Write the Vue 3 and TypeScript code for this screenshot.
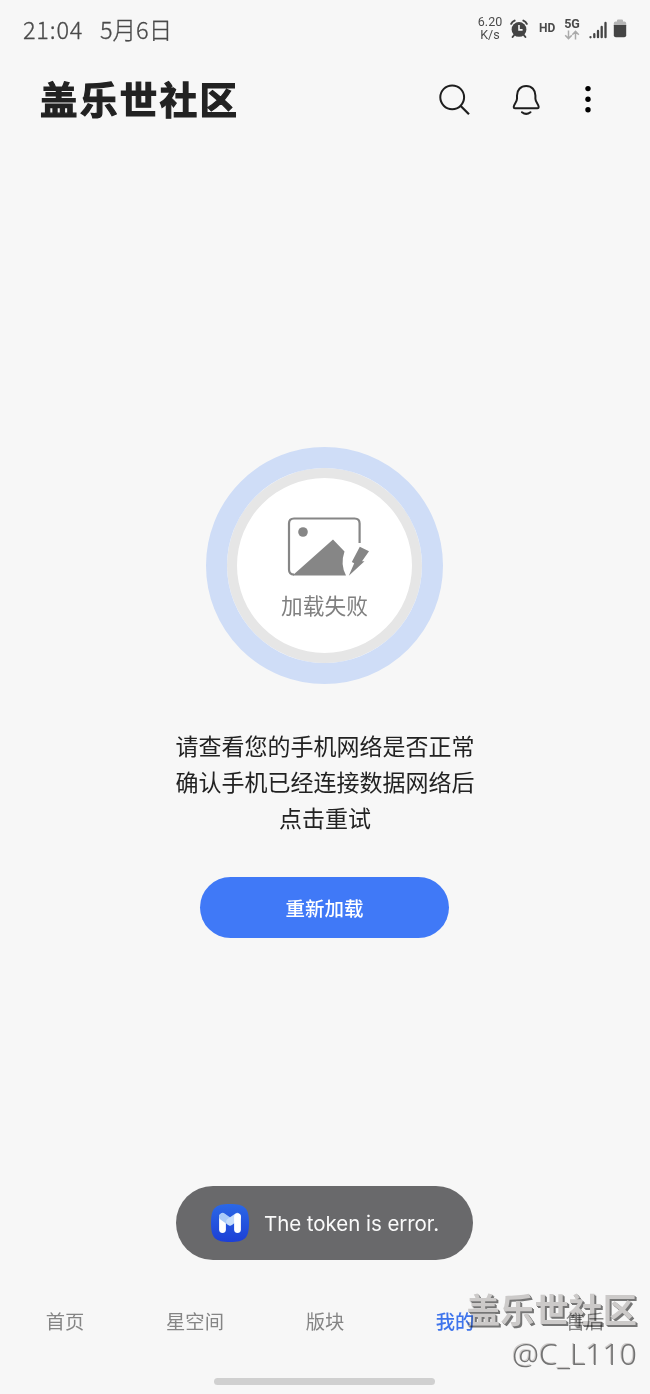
<script setup lang="ts">
interface Tab {
  label: string
  active: boolean
}

const tabs: Tab[] = [
  { label: '首页', active: false },
  { label: '星空间', active: false },
  { label: '版块', active: false },
  { label: '我的', active: true },
  { label: '售后', active: false },
]

const hints: string[] = ['请查看您的手机网络是否正常', '确认手机已经连接数据网络后', '点击重试']
</script>

<template>
  <div class="screen">
    <header class="status">
      <span class="clock">21:04</span>
      <span class="date">5月6日</span>
      <div class="speed"><span>6.20</span><span>K/s</span></div>
      <svg class="alarm" width="18" height="20" viewBox="0 0 18 20">
        <circle cx="9" cy="10.4" r="7.4" fill="#444" />
        <path d="M1.2 4.800Q2.200 2.500 4.600 1.600M16.800 4.800Q15.800 2.500 13.400 1.600" fill="none" stroke="#444" stroke-width="2" stroke-linecap="round" />
        <path d="M4.200 16L2.600 18M13.800 16l1.600 2" stroke="#444" stroke-width="2" stroke-linecap="round" />
        <path d="M9 6v4.900h3.600" fill="none" stroke="#f7f7f7" stroke-width="1.600" />
      </svg>
      <span class="hd">HD</span>
      <div class="net">
        <span>5G</span>
        <svg width="16" height="10" viewBox="0 0 16 10" fill="none" stroke="#aaa" stroke-width="1.500">
          <path d="M4.500 .5v8M1.200 5.300l3.300 3.300 3.300-3.300M11.500 9.500v-8M8.300 4.700l3.200-3.300 3.300 3.300" />
        </svg>
      </div>
      <svg class="signal" width="18" height="18" viewBox="0 0 18 18" stroke="#444" stroke-width="2.300" stroke-linecap="round">
        <path d="M1.500 16.200v.1M5.300 13.200v3M9 10v6.200M12.700 6v10.200M16.500 2v14.200" />
      </svg>
      <svg class="battery" width="14" height="19" viewBox="0 0 14 19">
        <path d="M.8 7V4.200Q.8 2.500 2.600 2.500H4V1.600Q4 .5 5 .5h4q1 0 1 1.100v.9h1.400q1.800 0 1.800 1.700V7z" fill="#b5b5b5" />
        <path d="M.8 6h12.400v10.300q0 2-2 2H2.800q-2 0-2-2z" fill="#444" />
      </svg>
    </header>

    <div class="appbar">
      <h1 class="title">盖乐世社区</h1>
      <svg class="search" width="32" height="32" viewBox="0 0 32 32" fill="none" stroke="#1e1e1e" stroke-width="2">
        <circle cx="13.200" cy="13.300" r="11.900" />
        <path d="M21.700 22l8.300 8.300" stroke-width="2.200" />
      </svg>
      <svg class="bell" width="28" height="32" viewBox="0 0 28 32" fill="none" stroke="#1e1e1e" stroke-width="2" stroke-linejoin="round">
        <path d="M14.200 2C8.500 2 5 6.200 5 11.500v3.200C5 18 1.700 20.700 1.700 23q0 1.200 1.300 1.200h22.400q1.300 0 1.300-1.200C26.700 20.700 23.400 18 23.400 14.700v-3.200C23.400 6.200 19.900 2 14.200 2z" />
        <path d="M10 28.200q4.200 3.400 8.400 0" stroke-linecap="round" />
      </svg>
      <svg class="more" width="8" height="28" viewBox="0 0 8 28">
        <circle cx="4" cy="3.600" r="2.700" /><circle cx="4" cy="14.200" r="2.700" /><circle cx="4" cy="24.800" r="2.700" />
      </svg>
    </div>

    <main class="content">
      <div class="badge">
        <svg width="84" height="62" viewBox="0 0 84 62">
          <path d="M73.600 27V7.500q0-5-5-5H8q-5 0-5 5v46q0 5 5 5" fill="none" stroke="#868686" stroke-width="2.200" />
          <circle cx="17" cy="16" r="4.800" fill="#868686" />
          <path d="M6.500 59.400L47 23.600 58.500 35.500Q54 48.500 60 59.400z" fill="#868686" />
          <path d="M73.800 30.700L83 35.200 76 45.200H78.500L62.800 59.800 68.200 47.300 65.800 46z" fill="#868686" />
        </svg>
        <span class="badge-label">加载失败</span>
      </div>
      <div class="hints">
        <p v-for="line in hints" :key="line">{{ line }}</p>
      </div>
      <button class="reload" type="button">重新加载</button>
    </main>

    <div class="toast">
      <svg width="40" height="40" viewBox="0 0 40 40">
        <defs>
          <linearGradient id="tile" x1="0" y1="0" x2="0" y2="1">
            <stop offset="0" stop-color="#2b68e6" /><stop offset="1" stop-color="#1c3fd6" />
          </linearGradient>
        </defs>
        <path d="M20 1C35 1 39 5 39 20S35 39 20 39 1 35 1 20 5 1 20 1z" fill="url(#tile)" />
        <path d="M12.500 14v12.500" stroke="#fff" stroke-width="6.800" stroke-linecap="round" />
        <path d="M12.800 13.700l7.200 5" stroke="#a9cbf8" stroke-width="7.400" stroke-linecap="round" />
        <path d="M20 18.700l7.200-5" stroke="#c6ddfb" stroke-width="7.400" stroke-linecap="round" />
        <path d="M27.500 14v12.500" stroke="#fff" stroke-width="6.800" stroke-linecap="round" />
      </svg>
      <span>The token is error.</span>
    </div>

    <nav class="tabs">
      <span v-for="tab in tabs" :key="tab.label" :class="{ active: tab.active }">{{ tab.label }}</span>
    </nav>
    <div class="home"></div>

    <div class="watermark">
      <div class="mark-name">盖乐世社区</div>
      <div class="mark-user">@C_L110</div>
    </div>
  </div>
</template>

<style>
body {
  margin: 0;
  background: #f7f7f7;
}
</style>

<style scoped>
.screen {
  position: relative;
  display: flex;
  flex-direction: column;
  align-items: center;
  width: 650px;
  height: 1394px;
  overflow: hidden;
  background: #f7f7f7;
  font-family: "Noto Sans CJK SC", sans-serif;
  color: #222;
}
.screen svg {
  display: block;
  flex: none;
}
.status {
  display: flex;
  align-items: center;
  box-sizing: border-box;
  width: 650px;
  height: 60px;
  padding-left: 23px;
  color: #4a4a4a;
  white-space: nowrap;
}
.clock,
.date {
  margin-top: -2px;
  font-size: 23.500px;
  font-weight: 300;
  line-height: 36px;
  -webkit-text-stroke: 0.300px #4a4a4a;
}
.clock {
  width: 77px;
  letter-spacing: 0.800px;
}
.date {
  width: 377px;
}
.speed {
  display: flex;
  flex-direction: column;
  align-items: center;
  width: 26px;
  margin-top: -4px;
  font: 12.500px/13px Roboto, sans-serif;
}
.alarm {
  margin: -3px 0 0 7px;
}
.hd {
  width: 17px;
  margin: -4px 0 0 11px;
  font: 700 12px/14px Roboto, sans-serif;
}
.net {
  display: flex;
  flex-direction: column;
  align-items: center;
  width: 16px;
  margin: -3px 0 0 8px;
  font: 700 12.500px/13px Roboto, sans-serif;
}
.signal {
  margin: -1px 0 0 9px;
}
.battery {
  margin: -3px 0 0 6px;
}
.appbar {
  display: flex;
  align-items: center;
  box-sizing: border-box;
  width: 650px;
  height: 80px;
  padding-left: 40px;
}
.title {
  width: 399px;
  margin: -5px 0 0;
  font-size: 37.500px;
  font-weight: 700;
  letter-spacing: 2.400px;
  line-height: 80px;
  -webkit-text-stroke: 1.200px #222;
  stroke-linejoin: round;
}
.search,
.bell {
  margin-top: -1px;
}
.more {
  margin-top: -3px;
}
.bell {
  margin-left: 41px;
}
.more {
  margin-left: 44px;
}
.content {
  display: flex;
  flex-direction: column;
  align-items: center;
  margin: 307px 1px 0 0;
}
.badge {
  display: flex;
  flex-direction: column;
  align-items: center;
  box-sizing: border-box;
  width: 237px;
  height: 237px;
  padding-top: 38px;
  border: 21px solid #cfddf7;
  border-radius: 50%;
  background: #fff;
  box-shadow: inset 0 0 0 10px #e6e6e6;
}
.badge svg {
  margin: 10px 0 0 6px;
}
.badge-label {
  margin-top: 11px;
  font-size: 21.700px;
  line-height: 32px;
  color: #808080;
}
.hints {
  margin: 43px 0 0 1px;
  font-size: 23px;
  line-height: 36px;
  text-align: center;
}
.hints p {
  margin: 0;
}
.reload {
  width: 249px;
  height: 61px;
  margin-top: 42px;
  padding: 0;
  border: 0;
  border-radius: 31px;
  background: #4079f7;
  color: #fff;
  font: 500 19.500px/61px "Noto Sans CJK SC", sans-serif;
}
.toast {
  display: flex;
  align-items: center;
  box-sizing: border-box;
  width: 297px;
  height: 74px;
  margin: 248px 1px 0 0;
  padding-left: 34px;
  border-radius: 37px;
  background: #69696b;
  color: #fafafa;
}
.toast span {
  margin: 2px 0 0 14px;
  font: 20.500px/30px Inter, sans-serif;
  letter-spacing: -0.050px;
  white-space: nowrap;
}
.tabs {
  display: grid;
  grid-template-columns: repeat(5, 130px);
  margin-top: 44px;
  font-size: 19.300px;
  line-height: 34px;
  text-align: center;
  color: #858585;
}
.tabs .active {
  color: #3e74ec;
  font-weight: 500;
}
.home {
  width: 221px;
  height: 7px;
  margin: 40px 1px 0 0;
  border-radius: 4px;
  background: #d0d0d0;
}
.watermark {
  position: absolute;
  right: 13px;
  bottom: 17px;
  text-align: right;
  white-space: nowrap;
  mix-blend-mode: multiply;
}
.mark-name {
  font-size: 34.200px;
  font-weight: 700;
  line-height: 46px;
  color: #d3d1d0;
  text-shadow: 1px 1px 0 #7a7a7a, 2px 2px 0 #7a7a7a;
}
.mark-user {
  font: 300 30px/46px "Noto Sans", sans-serif;
  color: #777;
  text-shadow: -1px -1px 0 #d8d5d4;
}
</style>
